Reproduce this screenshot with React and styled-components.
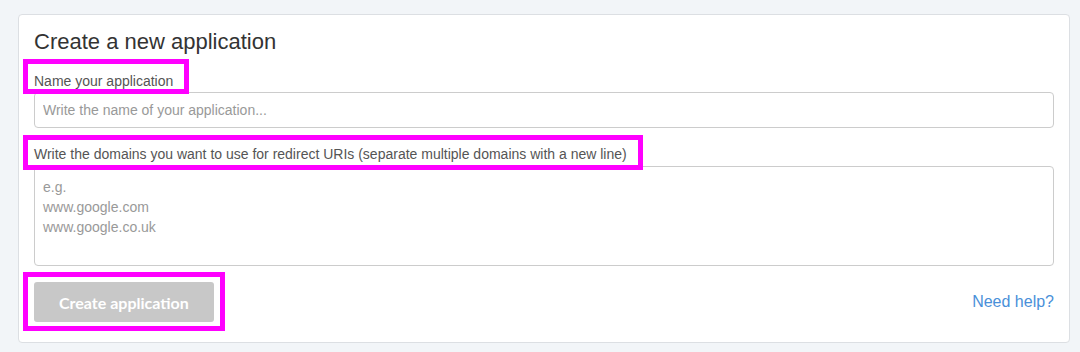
import React from "react";
import styled, { createGlobalStyle } from "styled-components";

const GlobalStyle = createGlobalStyle`
  html, body {
    margin: 0;
    padding: 0;
    background: #f2f5f8;
  }
  body {
    font-family: "Liberation Sans", Arial, sans-serif;
    color: #333;
  }
  * { box-sizing: border-box; }
`;

const Page = styled.div`
  padding: 14px 10px 10px 18px;
`;

const Card = styled.form`
  background: #fff;
  border: 1px solid #dcdfe3;
  border-radius: 4px;
  padding: 14px 15px 20px;
`;

const Title = styled.h2`
  margin: 0 0 16px;
  font-size: 22px;
  line-height: 26px;
  font-weight: 400;
  color: #333;
`;

const Group = styled.div`
  margin-bottom: 16px;
`;

// magenta highlight drawn over a field, insets given per use
const Marked = styled.span`
  position: relative;
  display: inline-block;

  &::after {
    content: "";
    position: absolute;
    top: ${(p) => p.$t}px;
    right: ${(p) => p.$r}px;
    bottom: ${(p) => p.$b}px;
    left: ${(p) => p.$l}px;
    border: 5px solid #ff00ff;
    pointer-events: none;
  }
`;

const Label = styled.label`
  display: block;
  margin-bottom: ${(p) => p.$gap ?? 1}px;
  font-size: 14px;
  line-height: 20px;
  color: #555;
`;

const fieldCss = `
  display: block;
  width: 100%;
  border: 1px solid #ccc;
  border-radius: 4px;
  background: #fff;
  font-family: "Liberation Sans", Arial, sans-serif;
  font-size: 14px;
  color: #555;
  outline: none;
  &::placeholder { color: #999; }
`;

const Input = styled.input`
  ${fieldCss}
  height: 36px;
  padding: 0 8px;
`;

const TextArea = styled.textarea`
  ${fieldCss}
  height: 100px;
  padding: 10px 8px 8px;
  line-height: 20px;
  resize: none;
`;

const Footer = styled.div`
  display: flex;
  align-items: center;
  justify-content: space-between;
`;

const Button = styled.button`
  display: block;
  height: 40px;
  padding: 0 25px;
  border: none;
  border-radius: 3px;
  background: #c8c8c8;
  color: #fff;
  font-family: Lato, "Open Sans", sans-serif;
  font-size: 16px;
  font-weight: 700;
  cursor: not-allowed;
`;

const HelpLink = styled.a`
  font-size: 16px;
  color: #4a90d9;
  text-decoration: none;
`;

export default function App() {
  return (
    <Page>
      <GlobalStyle />
      <Card onSubmit={(e) => e.preventDefault()}>
        <Title>Create a new application</Title>
        <Group>
          <Label htmlFor="app-name">
            <Marked $t={-12} $r={-16} $b={-3} $l={-11}>
              Name your application
            </Marked>
          </Label>
          <Input id="app-name" placeholder="Write the name of your application..." />
        </Group>
        <Group>
          <Label htmlFor="app-domains" $gap={2}>
            <Marked $t={-9} $r={-16} $b={-6} $l={-11}>
              Write the domains you want to use for redirect URIs (separate multiple domains with a new line)
            </Marked>
          </Label>
          <TextArea
            id="app-domains"
            placeholder={"e.g.\nwww.google.com\nwww.google.co.uk"}
          />
        </Group>
        <Footer>
          <Marked $t={-10} $r={-11} $b={-9} $l={-11}>
            <Button type="submit" disabled>
              Create application
            </Button>
          </Marked>
          <HelpLink href="#">Need help?</HelpLink>
        </Footer>
      </Card>
    </Page>
  );
}
